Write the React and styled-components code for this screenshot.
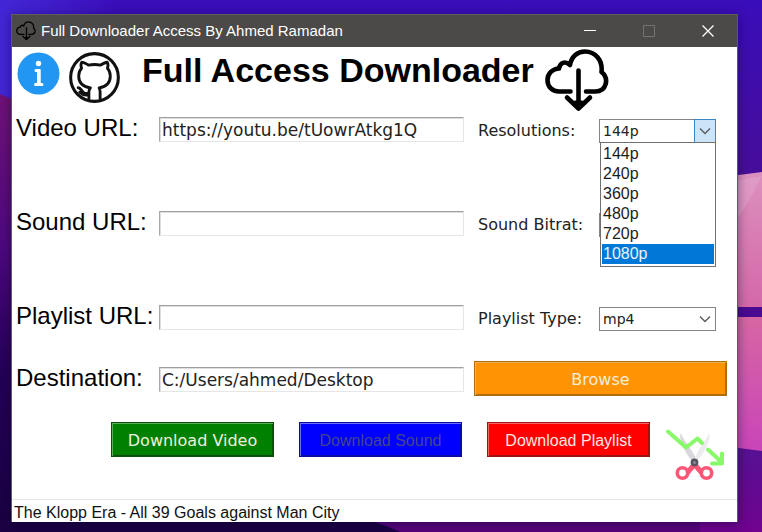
import React, { useState } from "react";
import styled, { createGlobalStyle, css } from "styled-components";

const sans = '"Liberation Sans", Arial, sans-serif';
const wide = '"DejaVu Sans", Verdana, sans-serif';

const GlobalStyle = createGlobalStyle`
  *, *::before, *::after { box-sizing: border-box; }
  body { margin: 0; background: #1c0046; }
`;

const Desktop = styled.div`
  position: relative;
  display: flex;
  min-height: 100vh;
  padding: 14px 24px 10px 11px;
  overflow: hidden;
`;

const Wallpaper = styled.svg`
  position: absolute;
  inset: 0;
  width: 100%;
  height: 100%;
`;

const Window = styled.main`
  position: relative;
  flex: 1;
  min-width: 0;
  display: flex;
  flex-direction: column;
  background: #fff;
  border: solid #5c5b63;
  border-width: 0 1px;
  box-shadow: 0 2px 10px rgba(10, 0, 40, 0.45);
`;

const TitleBar = styled.header`
  display: flex;
  align-items: center;
  height: 33px;
  padding-left: 4px;
  background: #4c4a48;
  border-top: 1px solid #5f5d5f;
  color: #fff;
  font: 15px/20px ${sans};
`;

const WindowTitle = styled.span`
  flex: 1;
  padding-left: 5px;
  white-space: nowrap;
`;

const WindowButton = styled.button`
  display: grid;
  place-items: center;
  width: 59px;
  height: 32px;
  padding: 0;
  border: 0;
  background: none;
  color: ${(p) => (p.disabled ? "#75736f" : "#fff")};
`;

const Body = styled.div`
  flex: 1;
  display: flex;
  flex-direction: column;
`;

const Banner = styled.div`
  display: flex;
  align-items: flex-start;
  height: 64px;
  padding: 2px 0 0 5px;
`;

const IconButton = styled.button`
  display: block;
  padding: 0;
  border: 0;
  background: none;
  line-height: 0;
`;

const BannerIcons = styled.div`
  display: flex;
  align-items: flex-start;
  gap: 9px;
  padding-top: 3px;
`;

const Heading = styled.h1`
  margin: 0 11px 0 22px;
  font: bold 34px/42px ${sans};
  color: #000;
  white-space: nowrap;
`;

const Form = styled.form`
  flex: 1;
  display: flex;
  flex-direction: column;
`;

const Row = styled.div`
  display: grid;
  grid-template-columns: 143px minmax(0, 1fr) 253px;
  align-items: start;
  height: ${(p) => p.$height}px;
  padding: 0 10px 0 4px;
`;

const FieldLabel = styled.label`
  font: 24px/34px ${sans};
  color: #000;
  white-space: nowrap;
`;

const TextInput = styled.input`
  width: calc(100% - 10px);
  height: 25px;
  margin-top: 6px;
  padding: 0 2px;
  border: 1px solid;
  border-color: #a0a0a0 #e6e6e6 #e6e6e6 #a8a8a8;
  border-radius: 0;
  outline: 0;
  background: #fff;
  box-shadow: inset 1px 1px 0 #dedede;
  color: #222;
  font: 17px/22px ${wide};
`;

const Choice = styled.div`
  display: flex;
  align-items: center;
  justify-content: space-between;
  margin-top: 8px;
  padding: 0 11px 0 4px;
`;

const ChoiceLabel = styled.label`
  color: #222;
  font: 16px/24px ${wide};
  white-space: nowrap;
`;

const Combo = styled.div`
  position: relative;
  display: flex;
  width: 117px;
`;

const Select = styled.select`
  appearance: none;
  width: 100%;
  height: 24px;
  padding: 0 22px 0 3px;
  border: 1px solid #858585;
  border-radius: 0;
  outline: 0;
  background: #fff;
  color: #222;
  font: 14px/20px ${wide};
`;

const Arrow = styled.span`
  position: absolute;
  top: 0;
  right: 0;
  display: grid;
  place-items: center;
  width: 22px;
  height: 24px;
  pointer-events: none;
  ${(p) =>
    p.$active &&
    css`
      border: 1px solid #3c86c6;
      background: #cce4f7;
    `}
`;

const Menu = styled.ul`
  position: absolute;
  z-index: 2;
  top: 23px;
  left: 1px;
  right: 0;
  margin: 0;
  padding: 1px 1px 2px;
  list-style: none;
  background: #fff;
  border: 1px solid #707070;
`;

const MenuItem = styled.li`
  height: 20px;
  padding-left: 1px;
  background: ${(p) => (p.$selected ? "#0078d7" : "#fff")};
  color: ${(p) => (p.$selected ? "#e8f3fc" : "#1c1c1c")};
  font: 16px/20px ${sans};
`;

const tones = {
  orange: ["#ff9304", "#eeb050", "#b06c12", "#f2edd6"],
  green: ["#008000", "#5cac5c", "#0a500a", "#f0f0dc"],
  blue: ["#0000ff", "#6c6cf8", "#0a0aa4", "#45458c"],
  red: ["#ff0000", "#f46464", "#a01212", "#fbe6e2"],
};

const ActionButton = styled.button`
  height: 35px;
  padding: 2px 0 0;
  border: 1px solid ${(p) => tones[p.$tone][2]};
  border-radius: 0;
  background: ${(p) => tones[p.$tone][0]};
  box-shadow: inset 1px 1px 0 ${(p) => tones[p.$tone][1]},
    inset -1px -1px 0 ${(p) => tones[p.$tone][2]};
  color: ${(p) => tones[p.$tone][3]};
  font: 16px/20px ${(p) => (p.$wide ? wide : sans)};
  white-space: nowrap;
`;

const Actions = styled.div`
  display: flex;
  align-items: flex-start;
  justify-content: space-between;
  padding: 0 13px 0 99px;
`;

const Downloads = styled.div`
  display: grid;
  grid-template-columns: repeat(3, 163px);
  gap: 25px;
`;

const TrimButton = styled(IconButton)`
  margin-top: 7px;
`;

const Status = styled.footer`
  height: 23px;
  padding: 2px 2px 0;
  border-top: 1px solid #e4e4e4;
  color: #111;
  font: 16px/22px ${sans};
  white-space: nowrap;
`;

function CloudIcon({ size, weight = 4.6 }) {
  return (
    <svg width={size} height={size} viewBox="0 0 64 64" fill="none" stroke="#000" strokeWidth={weight} strokeLinecap="round" strokeLinejoin="round" aria-hidden="true">
      <path d="M25.500 42.500H14C7 42.500 2.500 37.500 2.500 31C2.500 24.500 7.500 19.800 14 19.500C15 13.500 20 11.500 25 16C26.500 7.500 32.500 2.500 40 2.500C50 2.500 58 11 56.500 23C64.500 29.500 61.500 42.500 50.500 42.500H41" />
      <path d="M33.500 21.500V59M22 48.500L33.500 59.500L45 48.500" />
      <path d="M30 53H37L33.500 59Z" fill="#000" strokeWidth="3" />
    </svg>
  );
}

function InfoIcon() {
  return (
    <svg width="43" height="43" viewBox="0 0 43 43" aria-hidden="true">
      <circle cx="21.500" cy="21.500" r="21" fill="#2196f3" />
      <circle cx="21.500" cy="11.500" r="2.700" fill="#fff" />
      <path d="M19 18.500H22V32M18.500 32.500H25" fill="none" stroke="#fff" strokeWidth="3" strokeLinecap="round" strokeLinejoin="round" />
      <path d="M20 17H23.500V33H20Z" fill="#fff" />
    </svg>
  );
}

function GithubIcon() {
  return (
    <svg width="51" height="51" viewBox="0 0 50 50" fill="none" stroke="#111" strokeWidth="2.800" strokeLinecap="round" strokeLinejoin="round" aria-hidden="true">
      <circle cx="25" cy="25" r="23.400" strokeWidth="3" />
      <path d="M19.500 47.500V39Q19.500 37 21 35.200C13.500 34 9.500 30 9.500 23.500C9.500 20.500 10.500 18 12.300 16C11.500 13.500 11.500 11.500 12.500 10C15 10 17 11.500 19 12.800Q25 11.800 31 12.800C33 11.500 35.500 10 37.500 10C38.500 11.500 38.500 13.500 37.700 16C39.500 18 40.500 20.500 40.500 23.500C40.500 30 36.500 34 29.500 35.200Q30.500 37 30.500 39V47.500" />
      <path d="M9 35C12 35 12.500 39.500 15.500 40.500H19M10.500 39.500Q14 43 19 42" />
    </svg>
  );
}

function TrimIcon() {
  return (
    <svg width="58" height="52" viewBox="0 0 58 52" fill="none" aria-hidden="true">
      <path d="M14.500 4C12.500 12 18 22 27.500 34L31 31C26 20 18 12 14.500 4Z" fill="#d9d9dd" />
      <path d="M43.500 4C45 12 38 24 30 34L27.500 32C32 20 39 12 43.500 4Z" fill="#ececef" />
      <path d="M2 2.500L20 18.500L31.500 9.500L36 14M42 20.500L56 33.500M46 34.500H56V24.500" stroke="#88f968" strokeWidth="4" strokeLinecap="round" strokeLinejoin="round" />
      <path d="M28 36L21 44M29 36L36 44" stroke="#ff5577" strokeWidth="5" strokeLinecap="round" />
      <circle cx="16.500" cy="44" r="5.200" fill="#fff" stroke="#ff5577" strokeWidth="3.600" />
      <circle cx="40.500" cy="44" r="5.200" fill="#fff" stroke="#ff5577" strokeWidth="3.600" />
      <circle cx="28.500" cy="33.500" r="2.700" fill="#8c8794" stroke="#5a5563" strokeWidth="2.400" />
    </svg>
  );
}

function DesktopArt() {
  return (
    <Wallpaper viewBox="0 0 762 532" preserveAspectRatio="none" aria-hidden="true">
      <defs>
        <linearGradient id="sky" x1="0" y1="0" x2="0" y2="1">
          <stop offset="0" stopColor="#390db9" />
          <stop offset="0.330" stopColor="#470d9a" />
          <stop offset="1" stopColor="#38006c" />
        </linearGradient>
        <linearGradient id="left" x1="0" y1="0" x2="0" y2="1">
          <stop offset="0" stopColor="#701277" />
          <stop offset="0.350" stopColor="#4d087f" />
          <stop offset="0.640" stopColor="#230057" />
          <stop offset="1" stopColor="#190042" />
        </linearGradient>
        <linearGradient id="pinkTop" x1="0" y1="0" x2="0" y2="1">
          <stop offset="0" stopColor="#dc90bf" />
          <stop offset="1" stopColor="#d568a8" />
        </linearGradient>
        <linearGradient id="pinkBottom" x1="0" y1="0" x2="0" y2="1">
          <stop offset="0" stopColor="#d766a3" />
          <stop offset="1" stopColor="#c944b9" />
        </linearGradient>
        <linearGradient id="violet" x1="0" y1="0" x2="0" y2="1">
          <stop offset="0" stopColor="#541294" />
          <stop offset="1" stopColor="#70028e" />
        </linearGradient>
        <linearGradient id="glow">
          <stop offset="0" stopColor="#4327d6" />
          <stop offset="1" stopColor="#4327d6" stopOpacity="0" />
        </linearGradient>
      </defs>
      <rect width="762" height="532" fill="url(#sky)" />
      <rect width="120" height="150" fill="url(#glow)" />
      <path d="M0 94L11 99L400 532H0Z" fill="url(#left)" />
      <path d="M0 510H345L420 532H0Z" fill="#1b0043" />
      <path d="M345 515Q380 522 400 532H762V510H345Z" fill="#57047d" />
      <path d="M700 180L762 172V307H700Z" fill="url(#pinkTop)" />
      <path d="M762 176C752 196 745 207 738 218V180Z" fill="#e3a6ce" opacity="0.500" />
      <rect x="700" y="307" width="62" height="10" fill="#4b0b91" />
      <path d="M700 317H762V452L700 444Z" fill="url(#pinkBottom)" />
      <path d="M700 443L762 451V532H700Z" fill="url(#violet)" />
    </Wallpaper>
  );
}

function Picker({ id, label, options, open }) {
  const [value, setValue] = useState(options[0]);
  return (
    <Choice>
      <ChoiceLabel htmlFor={id}>{label}</ChoiceLabel>
      <Combo>
        <Select id={id} value={value} onChange={(e) => setValue(e.target.value)}>
          {options.map((o) => (
            <option key={o}>{o}</option>
          ))}
        </Select>
        <Arrow $active={open}>
          <svg width="12" height="8" viewBox="0 0 12 8" fill="none" stroke="#5c5f63" strokeWidth="1.500" aria-hidden="true">
            <path d="M1 1.500L6 6.500L11 1.500" />
          </svg>
        </Arrow>
        {open && (
          <Menu role="listbox" aria-label={label}>
            {options.map((o, i) => (
              <MenuItem key={o} role="option" aria-selected={i === options.length - 1} $selected={i === options.length - 1}>
                {o}
              </MenuItem>
            ))}
          </Menu>
        )}
      </Combo>
    </Choice>
  );
}

export default function App() {
  return (
    <>
      <GlobalStyle />
      <Desktop>
        <DesktopArt />
        <Window>
          <TitleBar>
            <CloudIcon size={20} weight={4.2} />
            <WindowTitle>Full Downloader Access By Ahmed Ramadan</WindowTitle>
            <WindowButton aria-label="Minimize">
              <svg width="12" height="12"><path d="M0 5.500H12" stroke="currentColor" /></svg>
            </WindowButton>
            <WindowButton aria-label="Maximize" disabled>
              <svg width="12" height="12"><path d="M0.500 0.500H11.500V11.500H0.500Z" fill="none" stroke="currentColor" /></svg>
            </WindowButton>
            <WindowButton aria-label="Close">
              <svg width="12" height="12"><path d="M0.500 0.500L11.500 11.500M11.500 0.500L0.500 11.500" stroke="currentColor" strokeWidth="1.300" /></svg>
            </WindowButton>
          </TitleBar>
          <Body>
            <Banner>
              <BannerIcons>
                <IconButton aria-label="Info"><InfoIcon /></IconButton>
                <IconButton aria-label="GitHub"><GithubIcon /></IconButton>
              </BannerIcons>
              <Heading>Full Access Downloader</Heading>
              <CloudIcon size={64} />
            </Banner>
            <Form onSubmit={(e) => e.preventDefault()}>
              <Row $height={94}>
                <FieldLabel htmlFor="video">Video URL:</FieldLabel>
                <TextInput id="video" defaultValue="https://youtu.be/tUowrAtkg1Q" />
                <Picker id="resolution" label="Resolutions:" options={["144p", "240p", "360p", "480p", "720p", "1080p"]} open />
              </Row>
              <Row $height={94}>
                <FieldLabel htmlFor="sound">Sound URL:</FieldLabel>
                <TextInput id="sound" />
                <Picker id="bitrate" label="Sound Bitrat:" options={["128k"]} />
              </Row>
              <Row $height={62}>
                <FieldLabel htmlFor="playlist">Playlist URL:</FieldLabel>
                <TextInput id="playlist" />
                <Picker id="type" label="Playlist Type:" options={["mp4", "mp3"]} />
              </Row>
              <Row $height={61}>
                <FieldLabel htmlFor="destination">Destination:</FieldLabel>
                <TextInput id="destination" defaultValue="C:/Users/ahmed/Desktop" />
                <ActionButton type="button" $tone="orange" $wide>Browse</ActionButton>
              </Row>
              <Actions>
                <Downloads>
                  <ActionButton type="button" $tone="green" $wide>Download Video</ActionButton>
                  <ActionButton type="button" $tone="blue" disabled>Download Sound</ActionButton>
                  <ActionButton type="button" $tone="red">Download Playlist</ActionButton>
                </Downloads>
                <TrimButton type="button" aria-label="Trim"><TrimIcon /></TrimButton>
              </Actions>
            </Form>
            <Status>The Klopp Era - All 39 Goals against Man City</Status>
          </Body>
        </Window>
      </Desktop>
    </>
  );
}
